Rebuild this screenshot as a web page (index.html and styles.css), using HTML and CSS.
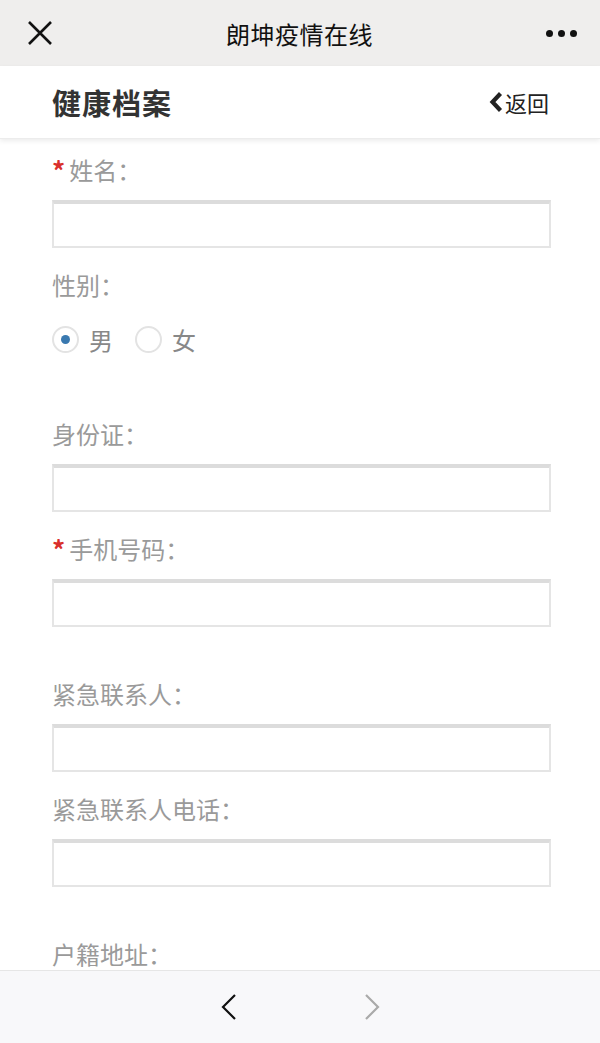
FILE: index.html
```html
<!DOCTYPE html>
<html lang="zh-CN">
<head>
    <meta charset="UTF-8">
    <meta name="viewport" content="width=device-width, initial-scale=1.0">
    <title>朗坤疫情在线</title>
    <link rel="stylesheet" href="styles.css">
</head>
<body>
<div class="page">

    <div class="topbar">
        <span class="close">
            <svg width="26" height="26" viewBox="0 0 26 26"><path d="M2 2L24 24M24 2L2 24" stroke="#111" stroke-width="2.6" fill="none"/></svg>
        </span>
        <div class="title">朗坤疫情在线</div>
        <span class="more"><i></i><i></i><i></i></span>
    </div>

    <div class="header">
        <h1>健康档案</h1>
        <a class="back">
            <svg width="14" height="22" viewBox="0 0 14 22"><path d="M11.5 2.5L3.5 11L11.5 19.5" stroke="#222" stroke-width="4.2" fill="none"/></svg>返回
        </a>
    </div>

    <div class="form">
        <div class="field">
            <label><span class="req">*</span>姓名：</label>
            <input class="input" type="text">
        </div>

        <div class="field gender">
            <label>性别：</label>
            <div class="radios">
                <span class="radio checked"></span><span class="opt">男</span>
                <span class="radio"></span><span class="opt">女</span>
            </div>
        </div>

        <div class="field">
            <label>身份证：</label>
            <input class="input" type="text">
        </div>

        <div class="field extra">
            <label><span class="req">*</span>手机号码：</label>
            <input class="input" type="text">
        </div>

        <div class="field">
            <label>紧急联系人：</label>
            <input class="input" type="text">
        </div>

        <div class="field extra">
            <label>紧急联系人电话：</label>
            <input class="input" type="text">
        </div>

        <div class="field">
            <label>户籍地址：</label>
        </div>
    </div>

    <div class="bottombar">
        <svg width="16" height="26" viewBox="0 0 16 26"><path d="M14 1L2 13L14 25" stroke="#111" stroke-width="2.2" fill="none"/></svg>
        <svg width="16" height="26" viewBox="0 0 16 26"><path d="M2 1L14 13L2 25" stroke="#aaa" stroke-width="2.2" fill="none"/></svg>
    </div>

</div>
</body>
</html>
```

FILE: styles.css
```css
html, body {
    margin: 0;
    padding: 0;
    font-family: "Noto Sans CJK SC", "Noto Sans", sans-serif;
    background-color: #fff;
}

.page {
    height: 1043px;
    overflow: hidden;
    position: relative;
}

.topbar {
    height: 66px;
    background-color: #efeeed;
    display: flex;
    align-items: center;
    justify-content: space-between;
    padding: 0 23px 0 27px;
}

.close {
    width: 26px;
    height: 26px;
    display: flex;
}

.title {
    font-size: 24px;
    color: #111;
    letter-spacing: 0.5px;
}

.more {
    display: flex;
    gap: 5px;
}

.more i {
    display: block;
    width: 7px;
    height: 7px;
    border-radius: 50%;
    background-color: #111;
}

.header {
    height: 71px;
    display: flex;
    align-items: center;
    justify-content: space-between;
    padding: 0 51px 1px 52px;
    box-shadow: 0 2px 5px rgba(0, 0, 0, 0.08);
    border-bottom: 1px solid #ececec;
    position: relative;
}

.header h1 {
    margin: 0;
    font-size: 29px;
    font-weight: bold;
    color: #333;
    letter-spacing: 1px;
}

.back {
    display: flex;
    align-items: center;
    gap: 2px;
    font-size: 22px;
    color: #222;
}

.form {
    padding: 15px 49px 0 52px;
}

.field {
    margin-bottom: 21px;
}

.field.extra {
    margin-bottom: 51px;
}

.field label {
    display: flex;
    align-items: center;
    height: 32px;
    font-size: 24px;
    line-height: 32px;
    color: #9a9a9a;
    margin-bottom: 14px;
}

.req {
    color: #d9302c;
    margin-right: 4px;
    font-size: 26px;
    font-weight: bold;
}

.input {
    display: block;
    box-sizing: border-box;
    width: 100%;
    height: 48px;
    border: 2px solid #e5e5e5;
    border-top: 4px solid #dcdcdc;
    background-color: #fff;
    outline: none;
    margin: 0;
}

.gender {
    margin-bottom: 61px;
}

.gender label {
    margin-bottom: 20px;
}

.radios {
    display: flex;
    align-items: center;
    height: 36px;
}

.radio {
    width: 23px;
    height: 23px;
    border: 2px solid #e3e3e3;
    border-radius: 50%;
    position: relative;
    box-sizing: content-box;
}

.radio.checked::after {
    content: "";
    position: absolute;
    left: 7px;
    top: 7px;
    width: 9px;
    height: 9px;
    border-radius: 50%;
    background-color: #3a79b0;
}

.opt {
    font-size: 24px;
    color: #888;
    margin: 0 22px 0 10px;
}

.bottombar {
    position: absolute;
    left: 0;
    right: 0;
    bottom: 0;
    height: 72px;
    background-color: #f8f8fa;
    border-top: 1px solid #e6e6e6;
    display: flex;
    align-items: center;
    justify-content: center;
    gap: 127px;
}
```
